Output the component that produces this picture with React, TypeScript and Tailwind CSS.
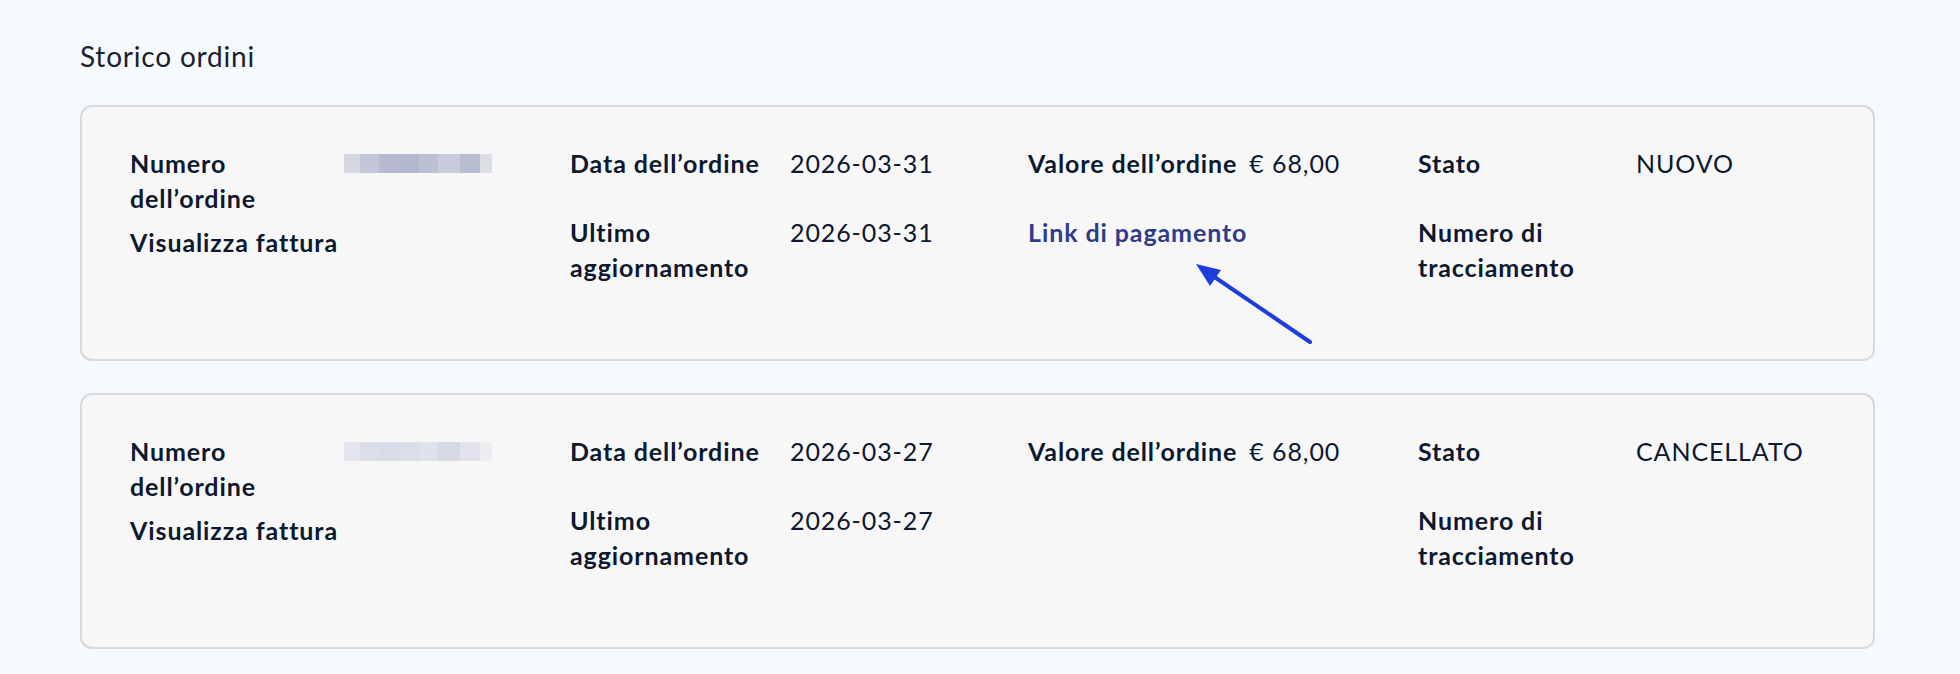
import React from "react";

type Order = {
  date: string;
  updated: string;
  status: string;
  paymentLink?: boolean;
  faded?: boolean;
};

const orders: Order[] = [
  { date: "2026-03-31", updated: "2026-03-31", status: "NUOVO", paymentLink: true },
  { date: "2026-03-27", updated: "2026-03-27", status: "CANCELLATO", faded: true },
];

function Redacted({ faded }: { faded?: boolean }) {
  // pixelated order number
  const cells = faded
    ? ["#e4e5ec", "#dcdee7", "#d9dbe5", "#dcdee7", "#e0e2ea", "#d6d9e4", "#e2e3ea", "#eceef2"]
    : ["#d5d7e2", "#c3c6d8", "#b6b9cf", "#b4b8ce", "#bcc0d3", "#c8cbda", "#b9bdd1", "#dcdee6"];
  const widths = [16, 19, 20, 20, 19, 22, 20, 12];
  return (
    <div className="flex h-[19px] mt-[8px]">
      {cells.map((c, i) => (
        <div key={i} style={{ background: c, width: widths[i] }} className="h-full" />
      ))}
    </div>
  );
}

function Item({
  label,
  labelW,
  children,
}: {
  label: React.ReactNode;
  labelW: string;
  children?: React.ReactNode;
}) {
  return (
    <div className="flex min-h-[60px]">
      <div className={`${labelW} shrink-0 font-bold`}>{label}</div>
      <div>{children}</div>
    </div>
  );
}

function OrderCard({ order }: { order: Order }) {
  return (
    <div className="relative rounded-[12px] border-2 border-[#d7d9dc] bg-[#f7f7f7] pl-[48px] pt-[39px] pb-[74px]">
      <div className="grid grid-cols-[440px_458px_390px_1fr]">
        <div className="flex flex-col gap-[9px]">
          <div className="flex">
            <div className="w-[214px] shrink-0 font-bold">
              Numero
              <br />
              dell’ordine
            </div>
            <Redacted faded={order.faded} />
          </div>
          <div className="font-bold">Visualizza fattura</div>
        </div>
        <div className="flex flex-col gap-[9px]">
          <Item label="Data dell’ordine" labelW="w-[220px]">
            {order.date}
          </Item>
          <Item
            label={
              <>
                Ultimo
                <br />
                aggiornamento
              </>
            }
            labelW="w-[220px]"
          >
            {order.updated}
          </Item>
        </div>
        <div className="flex flex-col gap-[9px]">
          <div className="flex min-h-[60px]">
            <div className="shrink-0 pr-[12px] font-bold">Valore dell’ordine</div>
            <div>€ 68,00</div>
          </div>
          {order.paymentLink && (
            <a className="font-bold text-[#2f3c8c]" href="#">
              Link di pagamento
            </a>
          )}
        </div>
        <div className="flex flex-col gap-[9px]">
          <Item label="Stato" labelW="w-[218px]">
            {order.status}
          </Item>
          <Item
            label={
              <>
                Numero di
                <br />
                tracciamento
              </>
            }
            labelW="w-[218px]"
          />
        </div>
      </div>
      {order.paymentLink && (
        <svg
          className="absolute left-[1100px] top-[140px]"
          width="150"
          height="110"
          viewBox="0 0 150 110"
        >
          <line x1="128" y1="95" x2="31" y2="29" stroke="#1d3edb" strokeWidth="4" strokeLinecap="round" />
          <polygon points="14,17 39,23 28,39" fill="#1d3edb" />
        </svg>
      )}
    </div>
  );
}

export default function App() {
  return (
    <div
      className="min-h-screen bg-[#f5fafd] text-[#0c1930] text-[25px] leading-[35px] tracking-[0.9px]"
      style={{ fontFamily: "Lato, 'Noto Sans', sans-serif" }}
    >
      <div className="ml-[80px] w-[1795px] pt-[36px]">
        <h1 className="text-[28px] leading-[40px] font-normal tracking-[0.8px] text-[#1b2230]">
          Storico ordini
        </h1>
        <div className="mt-[29px] flex flex-col gap-[32px]">
          {orders.map((o, i) => (
            <OrderCard key={i} order={o} />
          ))}
        </div>
      </div>
    </div>
  );
}
